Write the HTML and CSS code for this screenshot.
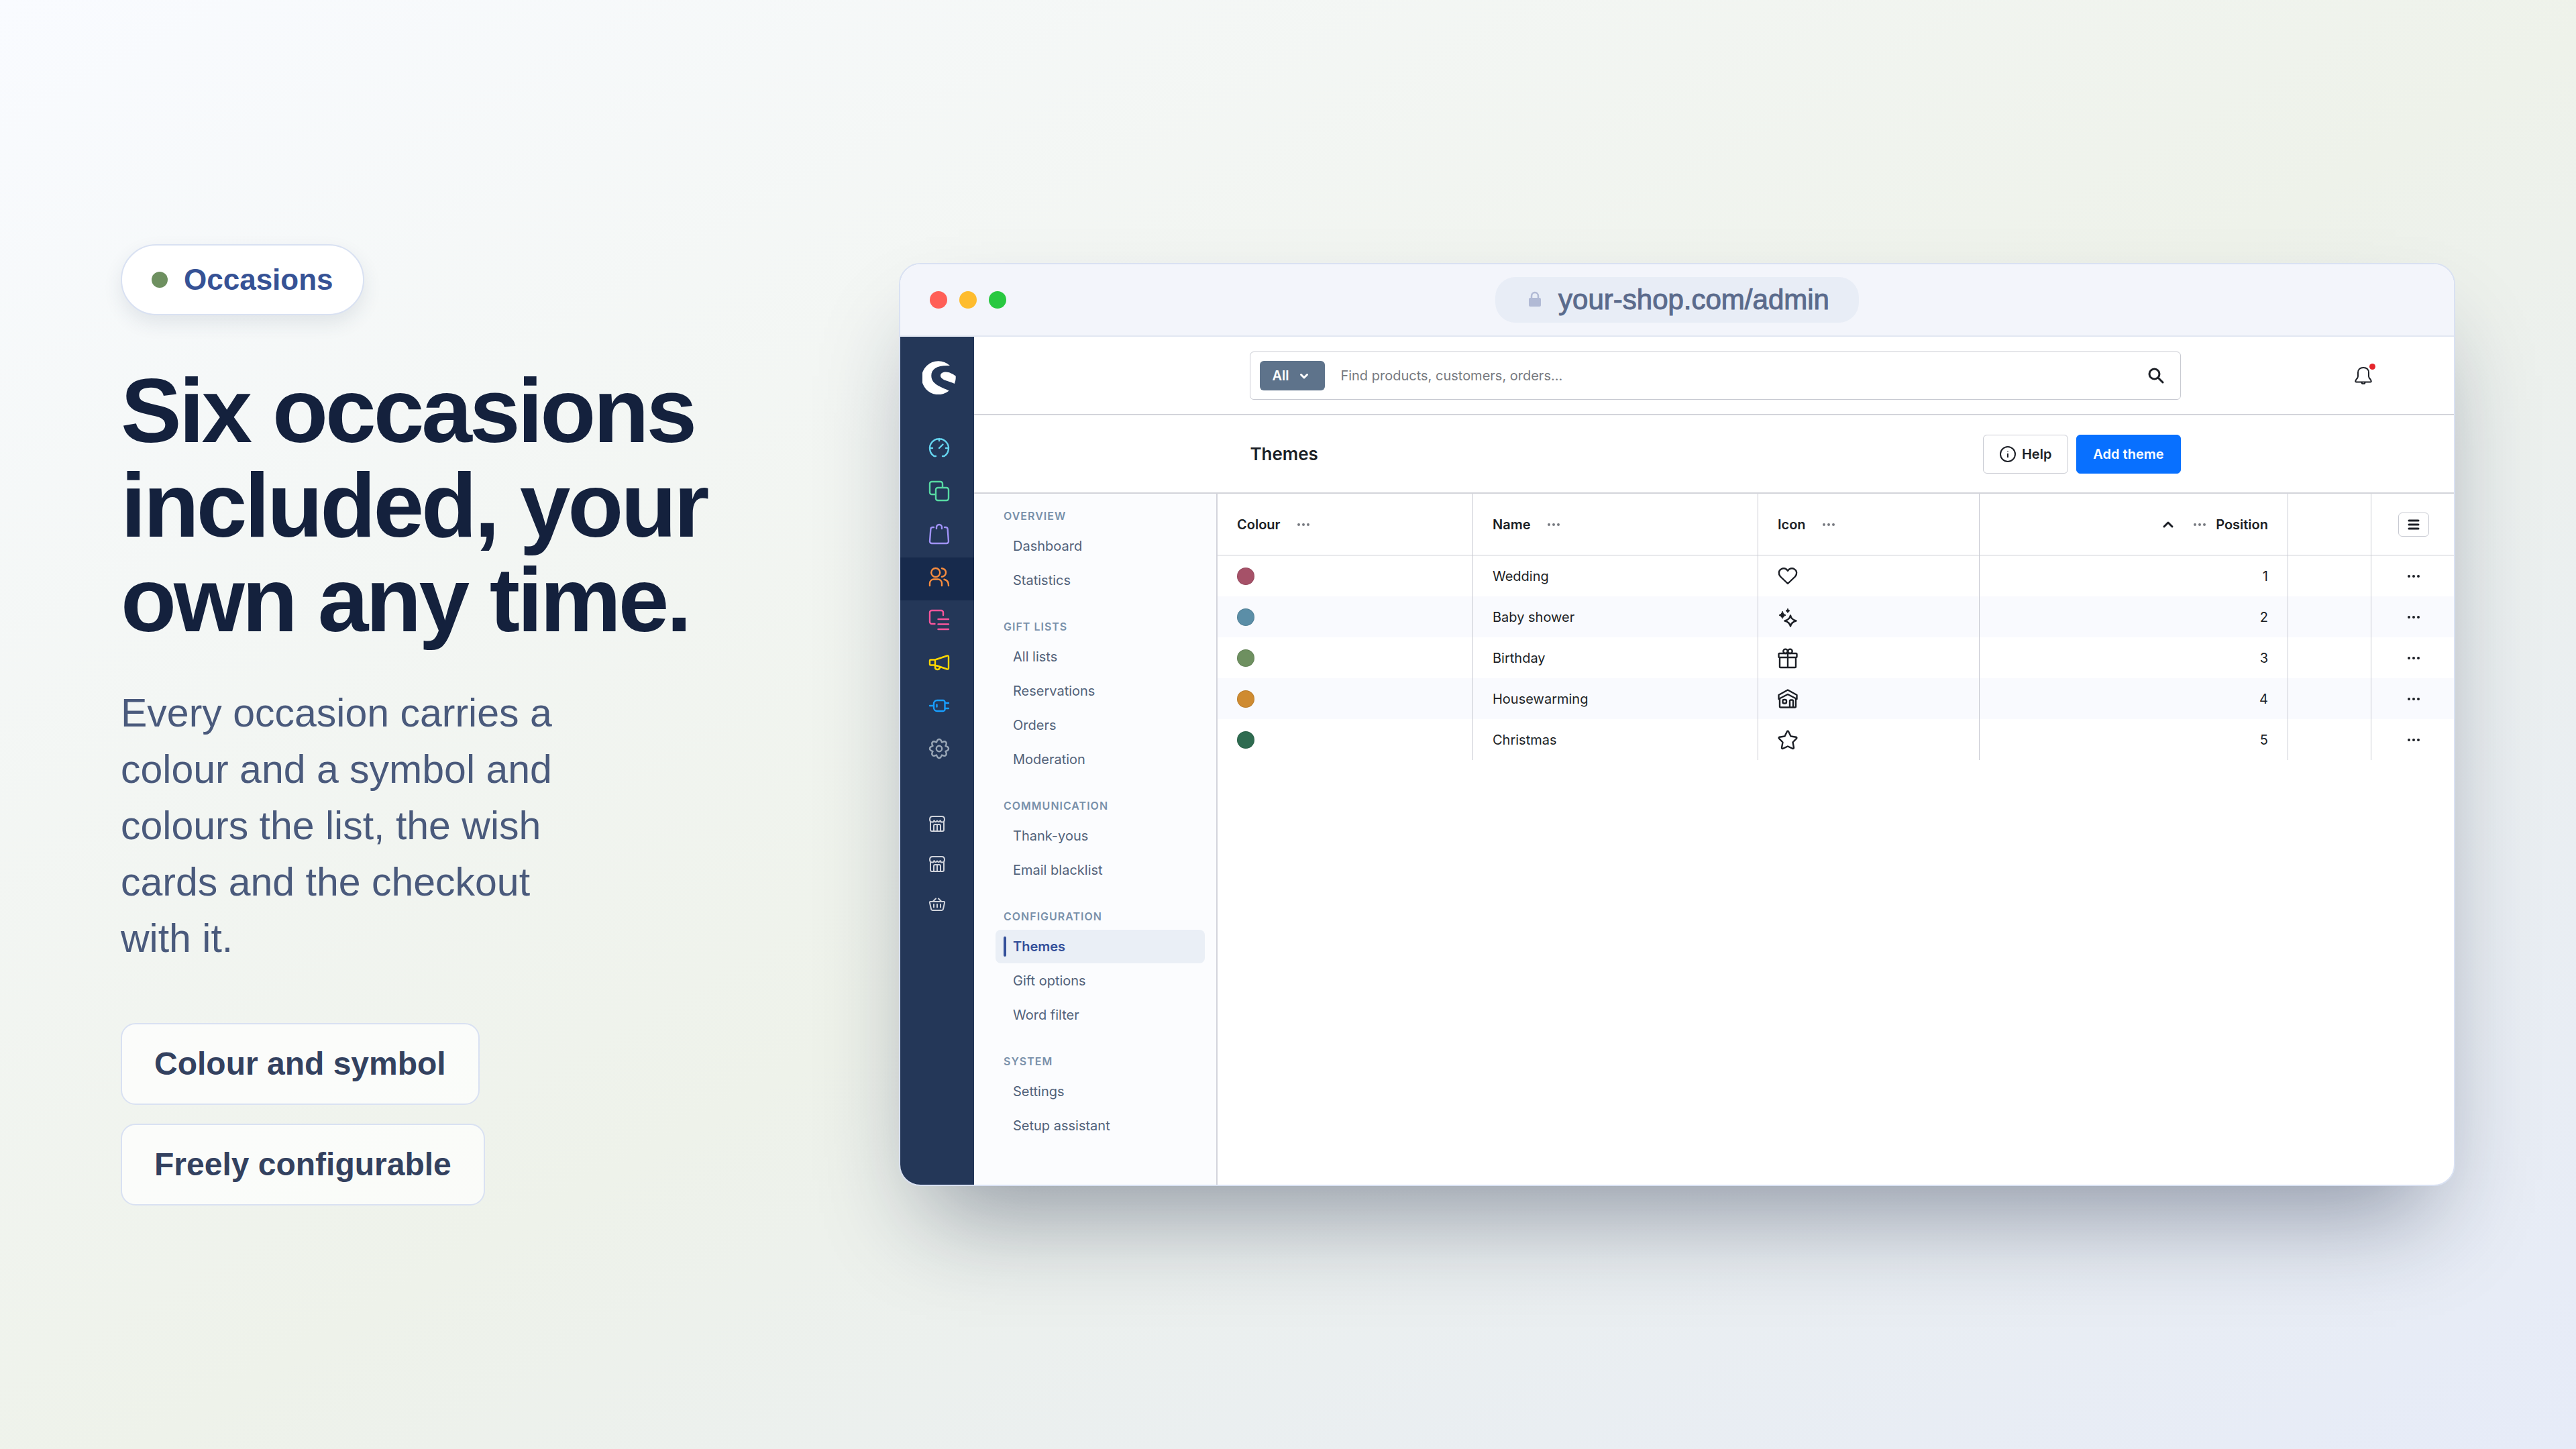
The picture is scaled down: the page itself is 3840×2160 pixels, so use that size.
FILE: index.html
```html
<!DOCTYPE html>
<html lang="en">
<head>
  <meta charset="UTF-8" />
  <title>Occasions</title>
  <meta name="viewport" content="width=device-width, initial-scale=1.0" />
  <link rel="stylesheet" href="styles.css">
</head>
<body>
  <main class="slide">
    <section class="intro">
      <span class="badge"><i class="badge-dot"></i>Occasions</span>
      <h1>Six occasions included, your own any time.</h1>
      <p class="lead">Every occasion carries a colour and a symbol and colours the list, the wish cards and the checkout with it.</p>
      <ul class="chips">
        <li class="chip">Colour and symbol</li>
        <li class="chip">Freely configurable</li>
      </ul>
    </section>

    <section class="browser">
      <div class="browser-bar">
        <div class="lights">
          <i class="light red"></i>
          <i class="light yellow"></i>
          <i class="light green"></i>
        </div>
        <div class="address">
          <svg class="lock" viewBox="0 0 30 30"><path d="M10 15V9.500a5 5.500 0 0 1 10 0V15" fill="none" stroke="currentColor" stroke-width="2.500" /><rect x="6" y="12" width="18" height="13" rx="2" fill="currentColor" /></svg>
          <span>your-shop.com/admin</span>
        </div>
      </div>

      <div class="admin">
        <nav class="rail" aria-label="Main menu">
          <a class="logo" href="#" aria-label="Home">
            <svg viewBox="0 0 50 50" fill="currentColor">
              <path d="M41 7A25 25 0 1 0 39.700 44.600C30 39 13.300 36 13.300 22C13.300 12 22 6 41 7Z" />
              <path d="M27 22C27 18 31 16.500 35 16.500C40 16.500 45.500 19.500 49.700 22.600C50 27 49.200 31 47.700 34C43 31 36 30.500 31 27.500C28 25.500 27 24 27 22Z" />
            </svg>
          </a>
          <div class="rail-list">
            <a class="rail-item cyan" href="#" aria-label="Dashboard">
              <svg class="icon" viewBox="0 0 30 30"><path d="M10 27H7.500A14 14 0 1 1 22.500 27H20M15 1v3M1 15h4M25 15h4M15 15l5.500-5.500" /></svg>
            </a>
            <a class="rail-item mint" href="#" aria-label="Catalogues">
              <svg class="icon" viewBox="0 0 30 30"><path d="M9 20H4a3 3 0 0 1-3-3V4a3 3 0 0 1 3-3h13a3 3 0 0 1 3 3v5" /><rect x="10" y="10" width="19" height="19" rx="3" /></svg>
            </a>
            <a class="rail-item violet" href="#" aria-label="Orders">
              <svg class="icon" viewBox="0 0 30 30"><path d="M7 5H5.500Q2.600 5 2.400 7.500L1 26a3 3 0 0 0 3 3h22a3 3 0 0 0 3-3L27.600 7.500Q27.400 5 24.500 5H23M11 7V5a4 4 0 0 1 8 0v2" /></svg>
            </a>
            <a class="rail-item orange active" href="#" aria-label="Customers">
              <svg class="icon" viewBox="0 0 30 30"><circle cx="9.700" cy="8.500" r="6.500" /><path d="M19 2.200C23 3 25 5.500 25 8.500S23 14 19 14.800M1 28v-3.500a6 6 0 0 1 6-6h6a6 6 0 0 1 6 6V28M22.500 18.700C27 19.500 29 22 29 28" /></svg>
            </a>
            <a class="rail-item pink" href="#" aria-label="Content">
              <svg class="icon" viewBox="0 0 30 30"><path d="M8.500 21H4a3 3 0 0 1-3-3V4a3 3 0 0 1 3-3h14a3 3 0 0 1 3 3v4M13.500 14H29M13.500 21.500H29M13.500 29H29" /></svg>
            </a>
            <a class="rail-item gold" href="#" aria-label="Marketing">
              <svg class="icon" viewBox="0 0 30 30"><path d="M9 10.500H2.500Q1 10.500 1 12v5q0 1.500 1.500 1.500H9zM9 10.500l18-6q2-.5 2 1.500v17q0 2-2 1.500l-18-6M9 18.500v3c0 4.500 6.500 5 7.500-.5" /></svg>
            </a>
            <a class="rail-item blue" href="#" aria-label="Extensions">
              <svg class="icon" viewBox="0 0 30 30"><path d="M1 15h6M12 7h9a2.500 2.500 0 0 1 2.500 2.500v11A2.500 2.500 0 0 1 21 23h-9a5 5 0 0 1-5-5v-6a5 5 0 0 1 5-5zM24 11h5M24 19h5M11.500 13.500v3" /></svg>
            </a>
            <a class="rail-item grey" href="#" aria-label="Settings">
              <svg class="icon" viewBox="-15 -15 30 30">
                <circle r="4.200" />
                <path id="tooth" d="M9.700-4C11.200-3 14-3 14 0S11.200 3 9.700 4" />
                <use href="#tooth" transform="rotate(45)" />
                <use href="#tooth" transform="rotate(90)" />
                <use href="#tooth" transform="rotate(135)" />
                <use href="#tooth" transform="rotate(180)" />
                <use href="#tooth" transform="rotate(225)" />
                <use href="#tooth" transform="rotate(270)" />
                <use href="#tooth" transform="rotate(315)" />
              </svg>
            </a>
          </div>
          <div class="channel-list">
            <a class="channel" href="#" aria-label="Storefront">
              <svg class="icon" viewBox="0 0 24 24"><path id="store" d="M2 9.500V21q0 2 2 2h16q2 0 2-2V9.500M5 1h14q4 0 4 4.500c0 5-6 5-6.500 1.500Q15 11 12 7.500 9 11 7.500 7C7 10.500 1 10.500 1 5.500Q1 1 5 1zM7 22.500V15q0-2 2-2h6q2 0 2 2v7.500M12 13.500v9" /></svg>
            </a>
            <a class="channel" href="#" aria-label="Second storefront">
              <svg class="icon" viewBox="0 0 24 24"><use href="#store" /></svg>
            </a>
            <a class="channel" href="#" aria-label="Sales channel">
              <svg class="icon" viewBox="0 0 24 24"><path d="M2 8h20q1.500 0 1 2l-2 9q-.4 2-2 2H5q-1.600 0-2-2L1 10Q.5 8 2 8zM5.500 8L10 3.500M18.500 8L14 3.500M7 12v4.500M12 12v4.500M17 12v4.500" /></svg>
            </a>
          </div>
        </nav>

        <div class="workspace">
          <header class="topbar">
            <form class="search">
              <button class="scope" type="button">All
                <svg class="scope-arrow" viewBox="0 0 12 12"><path d="M3 5l3 3 3-3" /></svg>
              </button>
              <input type="search" aria-label="Search" placeholder="Find products, customers, orders..." />
              <button class="search-go" type="submit" aria-label="Search">
                <svg viewBox="0 0 24 24"><circle cx="9.500" cy="9.500" r="7.500" /><path d="M15 15l7 7" /></svg>
              </button>
            </form>
            <button class="bell" type="button" aria-label="Notifications">
              <svg viewBox="0 0 26 26"><path d="M13 1C8 1 5 4 5 8.500V14q0 2-2.500 4.500Q0 22.500 2.500 22.500h21q2.500 0 0-4Q21 16 21 14V8.500C21 4 18 1 13 1zM10.500 23c0 3 5 3 5 0" /></svg>
            </button>
          </header>

          <div class="pagebar">
            <div class="pagebar-inner">
              <h2>Themes</h2>
              <button class="btn" type="button">
                <svg class="info" viewBox="0 0 24 24"><circle cx="12" cy="12" r="11" /><path d="M12 11v6M12 7v1" /></svg>
                Help
              </button>
              <button class="btn btn-primary" type="button">Add theme</button>
            </div>
          </div>

          <div class="content">
            <aside class="menu">
              <section class="menu-group">
                <h3>Overview</h3>
                <a href="#">Dashboard</a>
                <a href="#">Statistics</a>
              </section>
              <section class="menu-group">
                <h3>Gift lists</h3>
                <a href="#">All lists</a>
                <a href="#">Reservations</a>
                <a href="#">Orders</a>
                <a href="#">Moderation</a>
              </section>
              <section class="menu-group">
                <h3>Communication</h3>
                <a href="#">Thank-yous</a>
                <a href="#">Email blacklist</a>
              </section>
              <section class="menu-group">
                <h3>Configuration</h3>
                <a class="current" href="#">Themes</a>
                <a href="#">Gift options</a>
                <a href="#">Word filter</a>
              </section>
              <section class="menu-group">
                <h3>System</h3>
                <a href="#">Settings</a>
                <a href="#">Setup assistant</a>
              </section>
            </aside>

            <div class="grid">
              <table>
                <colgroup>
                  <col class="col-colour" />
                  <col class="col-name" />
                  <col class="col-icon" />
                  <col class="col-position" />
                  <col class="col-spacer" />
                  <col class="col-actions" />
                </colgroup>
                <thead>
                  <tr>
                    <th><div class="head">Colour <svg class="dots" viewBox="0 0 20 6"><path id="dots" d="M3 3h.01M10 3h.01M17 3h.01" /></svg></div></th>
                    <th><div class="head">Name <svg class="dots" viewBox="0 0 20 6"><use href="#dots" /></svg></div></th>
                    <th><div class="head">Icon <svg class="dots" viewBox="0 0 20 6"><use href="#dots" /></svg></div></th>
                    <th>
                      <div class="head head-right">
                        <svg class="sort" viewBox="0 0 12 12"><path d="M2 8l4-4 4 4" /></svg>
                        <svg class="dots" viewBox="0 0 20 6"><use href="#dots" /></svg>
                        <span>Position</span>
                      </div>
                    </th>
                    <th></th>
                    <th class="actions">
                      <button class="columns" type="button" aria-label="Columns"><svg viewBox="0 0 18 18"><path d="M2 3h14M2 9h14M2 15h14" /></svg></button>
                    </th>
                  </tr>
                </thead>
                <tbody>
                  <tr>
                    <td><i class="swatch wedding"></i></td>
                    <td>Wedding</td>
                    <td><svg class="icon" viewBox="0 0 30 30"><path d="M15 26L4 15.500C.5 11.500 1.500 6.500 5 4.500 9 2 13 3.500 15 7c2-3.500 6-5 10-2.500 3.500 2 4.500 7 1 11z" /></svg></td>
                    <td class="number">1</td>
                    <td></td>
                    <td class="actions"><button class="more" type="button" aria-label="Actions"><svg class="dots" viewBox="0 0 20 6"><use href="#dots" /></svg></button></td>
                  </tr>
                  <tr>
                    <td><i class="swatch baby"></i></td>
                    <td>Baby shower</td>
                    <td><svg class="icon" viewBox="0 0 30 30"><path class="solid" d="M7 6.500q1.200 4.300 5 5.500-3.800 1.200-5 5-1.200-3.800-5-5 3.800-1.200 5-5zM15 2.500q.7 2.300 3 3-2.300.7-3 3-.7-2.300-3-3 2.300-.7 3-3z" /><path d="M19 12.500q1.200 6 8.500 8-7.300 2-8.500 8-1.200-6-8.500-8 7.300-2 8.500-8z" /></svg></td>
                    <td class="number">2</td>
                    <td></td>
                    <td class="actions"><button class="more" type="button" aria-label="Actions"><svg class="dots" viewBox="0 0 20 6"><use href="#dots" /></svg></button></td>
                  </tr>
                  <tr>
                    <td><i class="swatch birthday"></i></td>
                    <td>Birthday</td>
                    <td><svg class="icon" viewBox="0 0 30 30"><path d="M3 14v14q0 1 1 1h22q1 0 1-1V14M2.500 8h25q1 0 1 1v4q0 1-1 1h-25q-1 0-1-1V9q0-1 1-1zM15 8v21" /><circle cx="11.500" cy="4.800" r="3.200" /><circle cx="18.500" cy="4.800" r="3.200" /></svg></td>
                    <td class="number">3</td>
                    <td></td>
                    <td class="actions"><button class="more" type="button" aria-label="Actions"><svg class="dots" viewBox="0 0 20 6"><use href="#dots" /></svg></button></td>
                  </tr>
                  <tr>
                    <td><i class="swatch house"></i></td>
                    <td>Housewarming</td>
                    <td><svg class="icon" viewBox="0 0 30 30"><path d="M15 1.500L28.500 9v6L15 8 1.500 15V9zM3 14.500V26q0 1.500 1.500 1.500h21q1.500 0 1.500-1.500V14.500M18 27.500V18q0-1.500 1.500-1.500h2q1.500 0 1.500 1.500v9.500" /><rect x="7.500" y="16" width="5.500" height="5.500" rx="2" /></svg></td>
                    <td class="number">4</td>
                    <td></td>
                    <td class="actions"><button class="more" type="button" aria-label="Actions"><svg class="dots" viewBox="0 0 20 6"><use href="#dots" /></svg></button></td>
                  </tr>
                  <tr>
                    <td><i class="swatch christmas"></i></td>
                    <td>Christmas</td>
                    <td><svg class="icon" viewBox="0 0 30 30"><path d="M13.800 2.700q1.200-1.800 2.400 0L19.500 9.500l7.800 1.200q1.800.6.700 2.100L22.500 18.500 24 26.500q0 2-1.800 1.400L15 24.500 7.800 27.900Q6 28.500 6 26.500l1.500-8L2 12.800q-1.100-1.500.7-2.100L10.500 9.500z" /></svg></td>
                    <td class="number">5</td>
                    <td></td>
                    <td class="actions"><button class="more" type="button" aria-label="Actions"><svg class="dots" viewBox="0 0 20 6"><use href="#dots" /></svg></button></td>
                  </tr>
                </tbody>
              </table>
            </div>
          </div>
        </div>
      </div>
    </section>
  </main>
</body>
</html>
```

FILE: styles.css
```css
:root {
  --navy: #14213d;
  --rail: #243758;
  --line: #c8cad2;
  --rule: #d3d4da;
  --edge: #d9e1f2;
  --ink: #1c1f26;
  --blue: #0870ff;
}

* {
  box-sizing: border-box;
}

body {
  margin: 0;
  font-family: "Liberation Sans", Arial, sans-serif;
  color: var(--navy);
}

h1, h2, h3, p, ul {
  margin: 0;
  padding: 0;
}

a {
  color: inherit;
  text-decoration: none;
}

button {
  font: inherit;
  color: inherit;
  cursor: pointer;
}

svg {
  display: block;
}

.slide {
  min-height: 100vh;
  padding: 120px 180px;
  display: grid;
  grid-template-columns: 1fr 2fr;
  align-items: center;
  background: linear-gradient(150deg, #f9fbff 0%, #eef2ea 52%, #e6ebf8 100%);
}

/* left column */
.badge {
  display: inline-flex;
  align-items: center;
  gap: 24px;
  height: 106px;
  padding: 0 44px;
  border: 2px solid var(--edge);
  border-radius: 53px;
  background: #fff;
  box-shadow: 0 12px 28px rgba(36, 55, 88, 0.1);
  color: #365295;
  font-size: 44px;
  font-weight: bold;
}

.badge-dot {
  width: 24px;
  height: 24px;
  border-radius: 50%;
  background: #6e9060;
}

h1 {
  max-width: 900px;
  margin-top: 72px;
  font-size: 136px;
  line-height: 141px;
  letter-spacing: -4px;
}

.lead {
  max-width: 680px;
  margin-top: 56px;
  color: #4a5a7c;
  font-size: 59px;
  line-height: 84px;
}

.chips {
  margin-top: 84px;
  display: flex;
  flex-direction: column;
  align-items: flex-start;
  gap: 28px;
  list-style: none;
}

.chip {
  padding: 32px 48px;
  border: 2px solid var(--edge);
  border-radius: 22px;
  background: rgba(255, 255, 255, 0.7);
  color: #33415f;
  font-size: 48px;
  line-height: 54px;
  font-weight: bold;
}

/* browser window */
.browser {
  border: 2px solid var(--edge);
  border-radius: 32px;
  overflow: hidden;
  background: #fff;
  box-shadow: 0 80px 140px -40px rgba(20, 32, 62, 0.42);
}

.browser-bar {
  display: grid;
  grid-template-columns: 1fr auto 1fr;
  align-items: center;
  height: 108px;
  padding: 0 44px;
  border-bottom: 2px solid #e2e7f2;
  background: #f3f5fb;
}

.lights {
  display: flex;
  gap: 18px;
}

.light {
  width: 26px;
  height: 26px;
  border-radius: 50%;
}

.red { background: #ff5f57; }
.yellow { background: #febc2e; }
.green { background: #28c840; }

.address {
  display: flex;
  align-items: center;
  gap: 20px;
  height: 68px;
  padding: 0 44px;
  border-radius: 30px;
  background: #e8edf6;
  color: #5b6b8c;
  font-size: 42px;
  -webkit-text-stroke: 1px #5b6b8c;
}

.lock {
  width: 30px;
  height: 30px;
  color: #b1bad5;
}

.admin {
  display: flex;
  font-family: Inter, "Open Sans", sans-serif;
  font-size: 20px;
  color: var(--ink);
}

.icon {
  width: 30px;
  height: 30px;
  fill: none;
  stroke: currentColor;
  stroke-width: 2.4;
  stroke-linecap: round;
  stroke-linejoin: round;
  overflow: visible;
}

.rail {
  flex: none;
  width: 110px;
  background: var(--rail);
}

.logo {
  display: block;
  padding: 36px 0 0 33px;
  color: #fff;
}

.logo svg {
  width: 50px;
  height: 50px;
}

.rail-list {
  margin-top: 51px;
}

.rail-item {
  display: flex;
  height: 64px;
  padding: 14px 0 0 43px;
}

.rail-item.active {
  background: #172a4c;
}

.cyan { color: #65d3ee; }
.mint { color: #57d9a3; }
.violet { color: #a092f8; }
.orange { color: #f88c3e; }
.pink { color: #f6559b; }
.gold { color: #ffd700; }
.blue { color: #189eff; }
.grey { color: #98a5b5; }

.channel-list {
  margin-top: 47px;
}

.channel {
  display: flex;
  align-items: center;
  height: 60px;
  padding-left: 43px;
  color: #cfd2da;
}

.channel .icon {
  width: 24px;
  height: 24px;
  stroke-width: 2;
}

.workspace {
  flex: 1;
  min-width: 0;
}

.topbar, .pagebar {
  display: grid;
  align-items: center;
  height: 117px;
  padding-left: 4px;
  border-bottom: 2px solid var(--rule);
}

.topbar {
  grid-template-columns: 1fr 63% 1fr;
}

.search {
  grid-column: 2;
  display: flex;
  align-items: center;
  height: 72px;
  padding: 0 24px 0 14px;
  border: 1px solid var(--line);
  border-radius: 6px;
}

.scope {
  display: flex;
  align-items: center;
  gap: 14px;
  height: 44px;
  padding: 0 22px 0 18px;
  border: 0;
  border-radius: 6px;
  background: #5e738b;
  color: #fff;
  font-weight: 600;
}

.scope-arrow, .sort {
  width: 18px;
  height: 18px;
  fill: none;
  stroke: currentColor;
  stroke-width: 2;
  stroke-linecap: round;
  stroke-linejoin: round;
}

.search input {
  flex: 1;
  height: 44px;
  padding: 0 23px;
  border: 0;
  outline: 0;
  background: none;
  font: inherit;
}

.search input::placeholder {
  color: #777a80;
}

.search-go, .bell {
  padding: 0;
  border: 0;
  background: none;
}

.search-go svg, .bell svg {
  width: 24px;
  height: 24px;
  fill: none;
  stroke: currentColor;
  stroke-width: 3;
  stroke-linecap: round;
}

.bell {
  position: relative;
  justify-self: end;
  margin-right: 122px;
}

.bell svg {
  width: 26px;
  height: 26px;
  stroke-width: 2;
}

.bell::after {
  content: "";
  position: absolute;
  top: -5px;
  right: -5px;
  width: 9px;
  height: 9px;
  border-radius: 50%;
  background: #e5252c;
}

.pagebar {
  grid-template-columns: 63%;
  justify-content: center;
}

.pagebar-inner {
  display: flex;
  align-items: center;
  gap: 12px;
}

h2 {
  margin-right: auto;
  font-size: 26px;
  font-weight: 600;
}

.btn {
  display: flex;
  align-items: center;
  gap: 9px;
  height: 58px;
  padding: 0 24px;
  border: 1px solid var(--line);
  border-radius: 6px;
  background: #fff;
  font-weight: 600;
}

.btn-primary {
  border-color: var(--blue);
  background: var(--blue);
  color: #fff;
}

.info {
  width: 24px;
  height: 24px;
  fill: none;
  stroke: currentColor;
  stroke-width: 2;
}

.content {
  display: flex;
  min-height: 1030px;
}

/* second level menu */
.menu {
  flex: none;
  width: 363px;
  padding: 21px 17px 32px 32px;
  display: flex;
  flex-direction: column;
  gap: 32px;
  border-right: 2px solid #d3d4dc;
  background: #fbfcfe;
  color: #52627a;
}

.menu-group {
  display: flex;
  flex-direction: column;
  gap: 1px;
}

h3 {
  padding: 0 12px 7px;
  color: #7890aa;
  font-size: 16px;
  line-height: 24px;
  font-weight: 600;
  letter-spacing: 1px;
  text-transform: uppercase;
}

.menu-group a {
  display: flex;
  align-items: center;
  height: 50px;
  padding-left: 26px;
  border-radius: 8px;
}

.menu-group .current {
  gap: 10px;
  padding-left: 12px;
  background: #eaeff6;
  color: #34509a;
  font-weight: 600;
}

.current::before {
  content: "";
  width: 4px;
  height: 30px;
  border-radius: 2px;
  background: #34509a;
}

/* data grid */
.grid {
  flex: 1;
  min-width: 0;
}

table {
  width: 100%;
  table-layout: fixed;
  border-collapse: separate;
  border-spacing: 0;
}

.col-colour { width: 381px; }
.col-name { width: 425px; }
.col-icon { width: 330px; }
.col-position { width: 460px; }
.col-spacer { width: 124px; }
.col-actions { width: 123px; }

th, td {
  padding: 0 29px;
  border-right: 1px solid var(--line);
  text-align: left;
}

th:last-child, td:last-child {
  border-right: 0;
}

th {
  height: 92px;
  border-bottom: 1px solid var(--line);
  font-weight: 600;
}

td {
  height: 61px;
}

tbody tr:nth-child(even) {
  background: #f9fafe;
}

.head {
  display: flex;
  align-items: center;
  gap: 24px;
}

.head-right {
  justify-content: flex-end;
  gap: 14px;
}

.sort {
  margin-right: 14px;
}

.dots {
  width: 20px;
  height: 6px;
  fill: none;
  stroke: currentColor;
  stroke-width: 4;
  stroke-linecap: round;
}

.head .dots {
  color: #777a80;
}

.swatch {
  display: block;
  width: 26px;
  height: 26px;
  border-radius: 50%;
  box-shadow: inset 0 0 0 1px rgba(0, 0, 0, 0.1);
}

.wedding { background: #a65168; }
.baby { background: #5b8ea7; }
.birthday { background: #6e9060; }
.house { background: #cf8b31; }
.christmas { background: #2e6b50; }

.solid {
  fill: currentColor;
  stroke-width: 1;
}

.number {
  text-align: right;
}

th.actions, td.actions {
  padding: 0 0 0 3px;
  text-align: center;
}

.more, .columns {
  padding: 0;
  border: 0;
  background: none;
}

.more {
  display: block;
  margin: 0 auto;
  padding: 10px;
}

.columns {
  display: grid;
  place-items: center;
  width: 46px;
  height: 36px;
  margin: 0 auto;
  border: 1px solid var(--line);
  border-radius: 6px;
}

.columns svg {
  width: 18px;
  height: 18px;
  stroke: currentColor;
  stroke-width: 3;
  stroke-linecap: round;
}
```
